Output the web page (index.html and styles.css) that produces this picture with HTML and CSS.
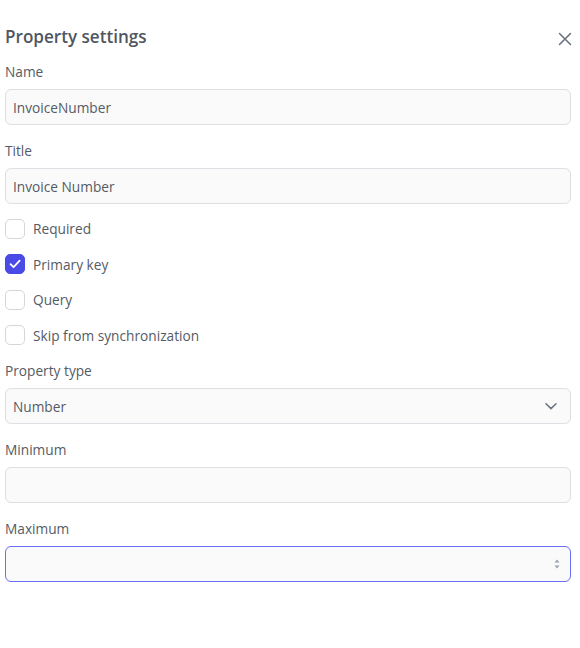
FILE: index.html
```html
<!DOCTYPE html>
<html>
<head>
<meta charset="utf-8">
<link rel="stylesheet" href="styles.css">
</head>
<body>
<div class="panel">
  <div class="header">
    <h2 class="title">Property settings</h2>
    <button class="close" aria-label="Close">
      <svg width="14" height="14" viewBox="0 0 14 14"><path d="M1.5 1.5 L12.5 12.5 M12.5 1.5 L1.5 12.5" stroke="#6b7280" stroke-width="1.6" stroke-linecap="round" fill="none"/></svg>
    </button>
  </div>

  <div class="field">
    <label class="label">Name</label>
    <div class="input">InvoiceNumber</div>
  </div>
  <div class="field">
    <label class="label">Title</label>
    <div class="input">Invoice Number</div>
  </div>

  <div class="checks">
    <div class="check"><span class="box"></span><span>Required</span></div>
    <div class="check"><span class="box checked"><svg width="14" height="14" viewBox="0 0 14 14"><path d="M2.5 7.2 L5.6 10.2 L11.6 3.6" stroke="#fff" stroke-width="1.8" fill="none" stroke-linecap="round" stroke-linejoin="round"/></svg></span><span>Primary key</span></div>
    <div class="check"><span class="box"></span><span>Query</span></div>
    <div class="check"><span class="box"></span><span>Skip from synchronization</span></div>
  </div>

  <div class="field">
    <label class="label">Property type</label>
    <div class="input select"><span>Number</span>
      <svg width="14" height="14" viewBox="0 0 14 14"><path d="M2 4.8 L7 9.6 L12 4.8" stroke="#6b7280" stroke-width="1.5" fill="none" stroke-linecap="round" stroke-linejoin="round"/></svg>
    </div>
  </div>
  <div class="field">
    <label class="label">Minimum</label>
    <div class="input"></div>
  </div>
  <div class="field">
    <label class="label">Maximum</label>
    <div class="input focus">
      <svg class="spin" width="8" height="14" viewBox="0 0 8 14"><path d="M1.5 5.5 L4 2.5 L6.5 5.5 Z M1.5 8.5 L4 11.5 L6.5 8.5 Z" fill="#9ca3af"/></svg>
    </div>
  </div>
</div>
</body>
</html>
```

FILE: styles.css
```css
* { box-sizing: border-box; }
body {
  margin: 0;
  background: #fff;
  font-family: "Open Sans", "Noto Sans", sans-serif;
  color: #555b64;
}
.panel {
  width: 566px;
  margin-left: 5px;
  padding-top: 23px;
}
.header {
  display: flex;
  justify-content: space-between;
  align-items: center;
  height: 26px;
}
.title {
  margin: 0;
  font-size: 17.1px;
  font-weight: 600;
  color: #50565f;
}
.close {
  border: none;
  background: none;
  padding: 0;
  margin-right: -1px;
  margin-top: 6px;
  display: flex;
}
.field {
  display: flex;
  flex-direction: column;
  gap: 7px;
  margin-top: 16px;
}
.header + .field { margin-top: 13px; }
.label {
  font-size: 13.7px;
  line-height: 20px;
  color: #555b64;
}
.input {
  height: 36px;
  border: 1px solid #dcdfe3;
  border-radius: 6px;
  background: #fafafa;
  padding: 0 7px;
  font-size: 13.7px;
  color: #555b64;
  display: flex;
  align-items: center;
}
.select { justify-content: space-between; padding-right: 12px; }
.focus {
  border-color: #6b6ef5;
  border-width: 1.5px;
  justify-content: flex-end;
  padding-right: 9px;
}
.checks {
  display: flex;
  flex-direction: column;
  margin-top: 15px;
  margin-bottom: -8px;
}
.check {
  display: flex;
  align-items: center;
  gap: 8px;
  height: 35.5px;
  font-size: 13.7px;
  color: #555b64;
}
.check:first-child { margin-top: -8px; }
.box {
  width: 20px;
  height: 20px;
  border: 1.5px solid #d4d6da;
  border-radius: 5px;
  background: #fff;
  display: flex;
  align-items: center;
  justify-content: center;
}
.box.checked {
  background: #4a4ae6;
  border-color: #4a4ae6;
}
```
